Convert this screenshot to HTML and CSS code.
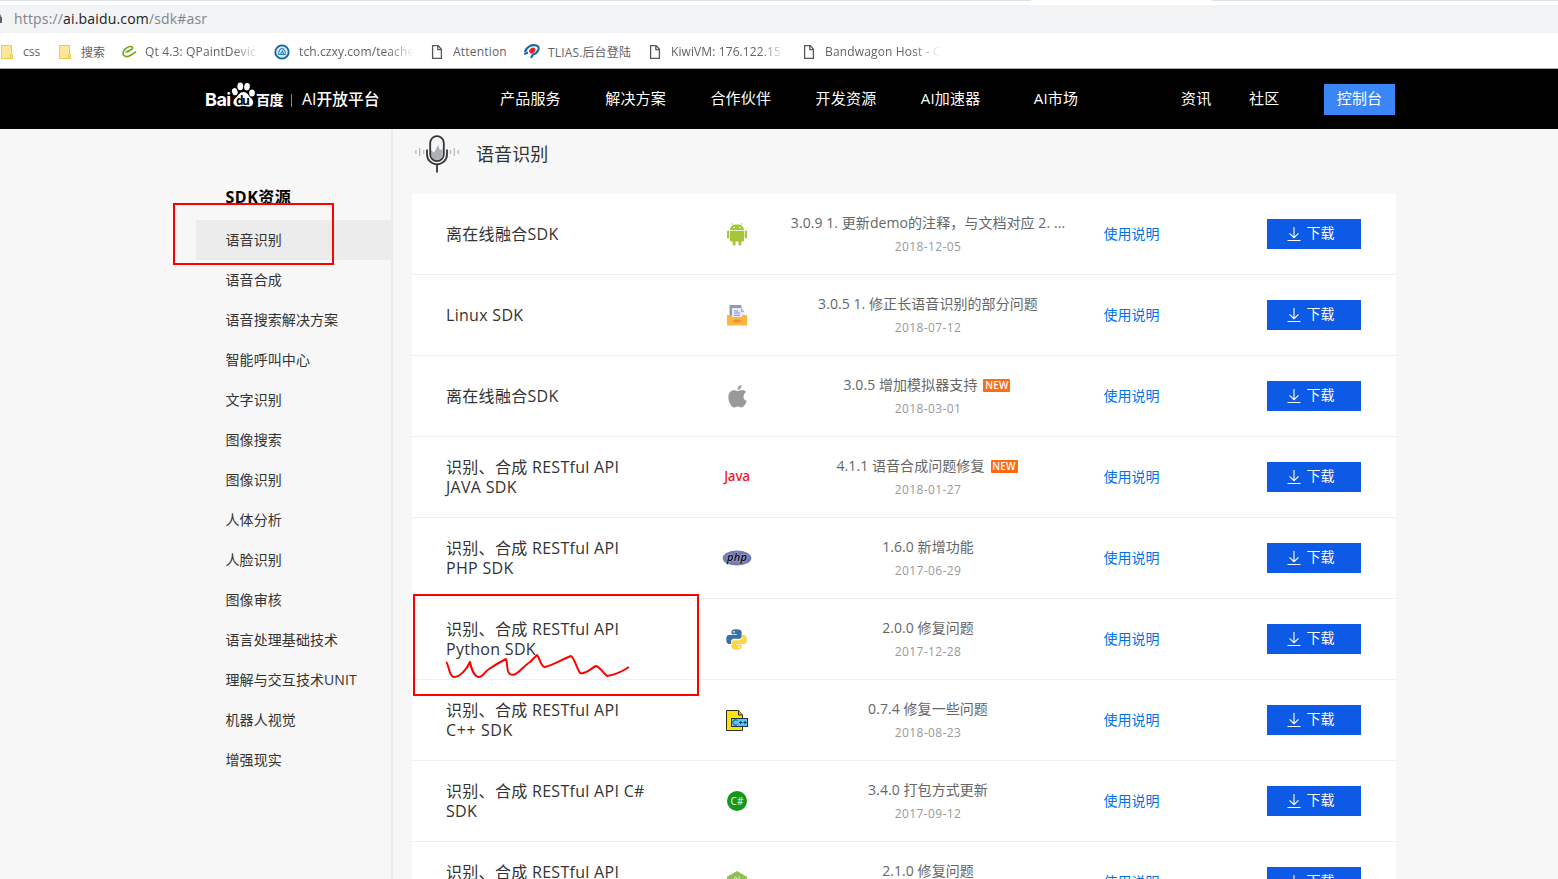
FILE: index.html
```html
<!DOCTYPE html>
<html lang="zh-CN">
<head>
<meta charset="utf-8">
<title>SDK资源</title>
<link rel="stylesheet" href="styles.css">
</head>
<body>
<svg class="defs" width="0" height="0">
  <symbol id="down" viewBox="0 0 14 16"><path d="M7 1v10.500M2.500 7.300L7 11.700l4.500-4.400M.5 14.500h13" fill="none" stroke="#fff" stroke-width="1.100"/></symbol>
  <symbol id="page" viewBox="0 0 12 16"><path d="M1.600 1.600h5.600l3.200 3.600v9.200H1.600zM6.800 1.600v4h3.600" fill="none" stroke="#55585c" stroke-width="1.300"/></symbol>
  <symbol id="folder" viewBox="0 0 14 16"><path d="M1.500 1.500h10v9h1v4h-11z" fill="#ffe69a" stroke="#eccb55"/><path d="M10.500 14v-3.500h2V14z" fill="#ffe69a" stroke="#eccb55"/></symbol>
</svg>
<div class="browser">
  <div class="tabs"></div>
  <div class="address">
    <svg class="lock" width="4" height="12" viewBox="0 0 4 12"><path d="M0 1q1 1 1 3h1v6H0z" fill="#5f6368"/></svg>
    <span class="url">https://<b>ai.baidu.com</b>/sdk#asr</span>
  </div>
  <div class="bookmarks">
    <span class="bm css"><svg width="14" height="16"><use href="#folder"/></svg><em>css</em></span>
    <span class="bm search"><svg width="14" height="16"><use href="#folder"/></svg><em>搜索</em></span>
    <span class="bm qt"><svg width="16" height="14" viewBox="0 0 16 14"><path d="M9 5c3-.5 3.500-3.500.5-3.500C5.500 1.500 1.500 6 2 9s4.500 3.200 7 1.500 3.500-1.500 6-4M4.500 7C6 7 8 6.300 9.500 5" fill="none" stroke="#74a81b" stroke-width="1.700"/></svg><em class="fade">Qt 4.3: QPaintDevic</em></span>
    <span class="bm tch"><svg width="16" height="16" viewBox="0 0 16 16"><circle cx="8" cy="8" r="6.700" fill="#d9edf8" stroke="#11659f" stroke-width="1.800"/><path d="M4.800 10.500C4 8 6 4.500 8 4.500s4 3.500 3.200 6zM6.500 10L8.500 7l1 3" fill="none" stroke="#267db5" stroke-width="1.100"/></svg><em class="fade">tch.czxy.com/teache</em></span>
    <span class="bm att"><svg width="12" height="16"><use href="#page"/></svg><em>Attention</em></span>
    <span class="bm tlias"><svg width="16" height="15" viewBox="0 0 16 15"><path d="M1 8C2 3 8 0 12.500 1.500S14 9 9 10.500l-2 3.500" fill="none" stroke="#1769a5" stroke-width="2.100"/><path d="M0 10l4-1.500" stroke="#1769a5" stroke-width="2"/><ellipse cx="8.300" cy="6.500" rx="3.300" ry="2.500" transform="rotate(-35 8.300 6.500)" fill="#ec1c24"/></svg><em>TLIAS.后台登陆</em></span>
    <span class="bm kiwi"><svg width="12" height="16"><use href="#page"/></svg><em class="fade">KiwiVM: 176.122.15</em></span>
    <span class="bm bwg"><svg width="12" height="16"><use href="#page"/></svg><em class="fade">Bandwagon Host - C</em></span>
  </div>
</div>
<header class="header">
  <div class="logo">
    <span class="bai">Bai</span>
    <svg class="paw" width="25" height="27" viewBox="0 0 25 27"><g fill="#fff"><ellipse cx="3.800" cy="10.700" rx="2.800" ry="3.600" transform="rotate(-15 3.800 10.700)"/><ellipse cx="9.300" cy="5.300" rx="2.900" ry="3.900"/><ellipse cx="16" cy="5.700" rx="2.800" ry="3.700" transform="rotate(10 16 5.700)"/><ellipse cx="21" cy="12" rx="2.900" ry="3.500"/><path d="M12.500 11c4 0 4.500 3.500 7.500 6 3.500 3 3 8.500-2 8.500-3 0-3-.5-5.500-.5s-3.500.5-5.500.5c-5 0-6-5.500-2.500-8.500s4-6 8-6z"/></g><text x="5" y="23.500" font-size="12" font-weight="700" textLength="14">du</text></svg>
    <span class="du">百度</span>
    <i class="divider"></i>
    <span class="platform">AI开放平台</span>
  </div>
  <nav class="nav"><a>产品服务</a><a>解决方案</a><a>合作伙伴</a><a>开发资源</a><a>AI加速器</a><a>AI市场</a></nav>
  <div class="tools"><a>资讯</a><a>社区</a><a class="console">控制台</a></div>
</header>
<div class="body">
  <aside class="side">
    <h2>SDK资源</h2>
    <ul>
      <li class="on">语音识别</li><li>语音合成</li><li>语音搜索解决方案</li><li>智能呼叫中心</li><li>文字识别</li><li>图像搜索</li><li>图像识别</li><li>人体分析</li><li>人脸识别</li><li>图像审核</li><li>语言处理基础技术</li><li>理解与交互技术UNIT</li><li>机器人视觉</li><li>增强现实</li>
    </ul>
  </aside>
  <main class="main">
    <div class="title">
      <svg width="46" height="40" viewBox="0 0 46 40"><g fill="none" stroke="#bcbcbc" stroke-width="1.400"><path d="M.9 15v4M4.700 13v8M8.700 15v4M35.500 15v4M39.300 13v8M43.300 15v4"/></g><path d="M16 15l2.500 2.500L20 16l3-6 2 5 2.500-1v6a5.800 5.800 0 0 1-11.500 0z" fill="#adb1b5"/><rect x="15.200" y="1.200" width="13.600" height="25" rx="6.800" fill="none" stroke="#353535" stroke-width="1.800"/><path d="M12 14.500v5a10 9.800 0 0 0 20 0v-5M22 29.500v8" fill="none" stroke="#353535" stroke-width="1.800"/></svg>
      <h1>语音识别</h1>
    </div>
    <div class="list">
      <div class="row"><div class="name">离在线融合SDK</div><div class="icon"><svg width="20" height="24" viewBox="0 0 20 24"><g fill="#a4c639"><path d="M3 8.200C3 4.500 6 2.500 10 2.500s7 2 7 5.700zM3 9h14v9.500q0 1-1 1H4q-1 0-1-1z"/><rect y="8.500" width="2.300" height="8" rx="1.100"/><rect x="17.700" y="8.500" width="2.300" height="8" rx="1.100"/><rect x="5.700" y="18" width="2.800" height="5.500" rx="1.200"/><rect x="11.500" y="18" width="2.800" height="5.500" rx="1.200"/></g><path d="M6.500 3.500L5 1M13.500 3.500L15 1" stroke="#a4c639" stroke-width=".8"/><circle cx="7" cy="5.500" r=".7" fill="#fff"/><circle cx="13" cy="5.500" r=".7" fill="#fff"/></svg></div><div class="desc"><p>3.0.9 1. 更新demo的注释，与文档对应 2. ...</p><time>2018-12-05</time></div><a class="doc">使用说明</a><a class="btn"><svg width="14" height="16"><use href="#down"/></svg><span>下载</span></a></div>
      <div class="row"><div class="name">Linux SDK</div><div class="icon"><svg width="20" height="21" viewBox="0 0 20 21"><path d="M2.500 0h12v12h-12z" fill="#929bb5"/><path d="M5 3h9l3.500 4v6H5z" fill="#e4eaf8"/><path d="M14 3v4h3.500z" fill="#aab4cf"/><path d="M7 6h4M7 8h6M7 10.300h6" stroke="#8290b5"/><path d="M0 10h4l1.500 2h9l1.500-2h4v10.500H0z" fill="#f9b83c"/><rect x="6" y="14.500" width="8" height="3" rx="1.500" fill="#ec8f38"/></svg></div><div class="desc"><p>3.0.5 1. 修正长语音识别的部分问题</p><time>2018-07-12</time></div><a class="doc">使用说明</a><a class="btn"><svg width="14" height="16"><use href="#down"/></svg><span>下载</span></a></div>
      <div class="row"><div class="name">离在线融合SDK</div><div class="icon"><svg width="19" height="23" viewBox="0 0 19 23"><path d="M15.500 12c0-2.500 1.200-4 2.600-5C15.500 4 12.500 5 9.800 6.200 7 5 4 4.500 1.700 7.500-1.500 12 1.500 20 5 22.300c2 .7 3-.7 4.800-.7s2.700 1.300 4.700.7c2-1.300 3.600-4 4.200-6.300-1.900-.8-3.200-2-3.200-4zM9.500 5C9.300 2.500 11 .5 13.500 0c.2 2.500-1.500 4.700-4 5z" fill="#999"/></svg></div><div class="desc"><p>3.0.5 增加模拟器支持<b class="new">NEW</b></p><time>2018-03-01</time></div><a class="doc">使用说明</a><a class="btn"><svg width="14" height="16"><use href="#down"/></svg><span>下载</span></a></div>
      <div class="row"><div class="name">识别、合成 RESTful API<br>JAVA SDK</div><div class="icon java">Java</div><div class="desc"><p>4.1.1 语音合成问题修复<b class="new">NEW</b></p><time>2018-01-27</time></div><a class="doc">使用说明</a><a class="btn"><svg width="14" height="16"><use href="#down"/></svg><span>下载</span></a></div>
      <div class="row"><div class="name">识别、合成 RESTful API<br>PHP SDK</div><div class="icon"><svg width="30" height="16" viewBox="0 0 30 16"><ellipse cx="15" cy="8" rx="14.400" ry="7.600" fill="#777bb3"/><text x="5" y="10.500" font-size="11" font-weight="600" font-style="italic" textLength="20" stroke="#aeb2d5" stroke-width="1" paint-order="stroke">php</text></svg></div><div class="desc"><p>1.6.0 新增功能</p><time>2017-06-29</time></div><a class="doc">使用说明</a><a class="btn"><svg width="14" height="16"><use href="#down"/></svg><span>下载</span></a></div>
      <div class="row"><div class="name">识别、合成 RESTful API<br>Python SDK</div><div class="icon python"><svg width="21" height="21" viewBox="0 0 21 21"><path d="M10.500.3C6.500.3 5.500 1.500 5.500 3v2.300h5.300V6H3C1 6 .2 8 .2 10.500S1.200 15 3 15h2v-2.500C5 10.800 6.500 9.800 8 9.800h5c1.600 0 2.600-1.200 2.600-2.600V3c0-1.600-1.600-2.700-5.100-2.700z" fill="#3772a4"/><path d="M10.500 20.700c4 0 5-1.200 5-2.700v-2.300h-5.300V15H18c2 0 2.800-2 2.800-4.500S19.800 6 18 6h-2v2.500c0 1.700-1.500 2.700-3 2.700H8c-1.600 0-2.600 1.200-2.600 2.600V18c0 1.600 1.600 2.700 5.100 2.700z" fill="#fdd545"/><circle cx="8" cy="2.800" r=".9" fill="#fff"/><circle cx="13" cy="18.200" r=".9" fill="#fff"/></svg></div><div class="desc"><p>2.0.0 修复问题</p><time>2017-12-28</time></div><a class="doc">使用说明</a><a class="btn"><svg width="14" height="16"><use href="#down"/></svg><span>下载</span></a></div>
      <div class="row"><div class="name">识别、合成 RESTful API<br><span class="cpp">C++ SDK</span></div><div class="icon"><svg width="22" height="21" viewBox="0 0 22 21"><path d="M.5.500h12l4 4.500v15.500H.5z" fill="#ffe20a" stroke="#332f20"/><path d="M12.500.500V5h4" fill="#e9b900" stroke="#332f20"/><rect x="5.500" y="8.500" width="16" height="8" fill="#5ac8fa" stroke="#1c3440"/><path d="M11.500 10.700q-1-1-2.500-.8c-3 .5-2.500 5 0 5.200q1.500.2 2.500-.8M13 12.500h3.500M14.700 10.800v3.500M17.300 12.500h3.500M19 10.800v3.500" fill="none" stroke="#17425a"/></svg></div><div class="desc"><p>0.7.4 修复一些问题</p><time>2018-08-23</time></div><a class="doc">使用说明</a><a class="btn"><svg width="14" height="16"><use href="#down"/></svg><span>下载</span></a></div>
      <div class="row"><div class="name">识别、合成 RESTful API C#<br>SDK</div><div class="icon"><svg width="20" height="20" viewBox="0 0 20 20"><circle cx="10" cy="10" r="10" fill="#129a17"/><text x="3.500" y="13.500" font-size="10" textLength="13" fill="#fff">C#</text></svg></div><div class="desc"><p>3.4.0 打包方式更新</p><time>2017-09-12</time></div><a class="doc">使用说明</a><a class="btn"><svg width="14" height="16"><use href="#down"/></svg><span>下载</span></a></div>
      <div class="row"><div class="name">识别、合成 RESTful API<br>&nbsp;</div><div class="icon"><svg width="20" height="23" viewBox="0 0 20 23"><path d="M10 0l10 5.700v11.500L10 23 0 17.200V5.700z" fill="#8cc152"/><path d="M7.500 8.500V6.500q2-1.500 2 .5t-1 1M11 6q2-.5 1.500 1.500T11 7.500" fill="none" stroke="#dcedc8" stroke-width=".9"/></svg></div><div class="desc"><p>2.1.0 修复问题</p><time>&nbsp;</time></div><a class="doc">使用说明</a><a class="btn"><svg width="14" height="16"><use href="#down"/></svg><span>下载</span></a></div>
    </div>
  </main>
</div>
<svg class="marks" width="1558" height="879" viewBox="0 0 1558 879"><g fill="none" stroke="#f00" stroke-width="2"><path d="M174 204h159v60H174zM414 595h284v100H414z"/><path d="M446 662c3 2 3 15 8 15 6 0 13-8 16-15 1 5 4 15 9 15 4 0 5-5 10-8 6-4 11-7 17-10 2 4 0 13 4 15 6 4 13-8 20-12l7-7c3 3 4 13 8 12 8-2 18-8 26-11 4 3 5 11 9 17 5 2 10-4 16-7 4 1 7 7 11 10 7-1 16-5 22-9" stroke-linejoin="round"/></g></svg>
</body>
</html>
```
FILE: styles.css
```css
* { box-sizing: border-box; }
body { margin: 0; height: 879px; overflow: hidden; background: #f7f7f7; color: #333; font-family: "Open Sans", "Noto Sans CJK SC", sans-serif; font-size: 14px; }
h1, h2, p, ul { margin: 0; padding: 0; font-weight: 400; }
ul { list-style: none; }
svg { flex: none; display: block; }
.defs { position: absolute; }
.browser { height: 69px; background: #fff; border-bottom: 1px solid #aaa; }
.tabs { height: 5px; }
.tabs::before { content: ""; display: block; height: 1px; background: linear-gradient(90deg, #dee1e6 1031px, #fff 1031px 1212px, #dee1e6 1212px); }
.address { height: 28px; background: #f1f3f4; display: flex; align-items: center; color: #80868b; padding-bottom: 1px; }
.url { margin-left: 10px; font-size: 14px; letter-spacing: .17px; }
.url b { font-weight: 400; color: #202124; }
.bookmarks { display: flex; height: 35px; align-items: center; color: #5f6368; font-size: 12px; padding-top: 2px; }
.bm { display: flex; align-items: center; flex: none; white-space: nowrap; }
.bm em { font-style: normal; }
.fade { -webkit-mask-image: linear-gradient(90deg, #000 88px, transparent 115px); mask-image: linear-gradient(90deg, #000 88px, transparent 115px); }
.css { width: 58px; } .css em { margin-left: 9px; }
.search { width: 63px; } .search em { margin-left: 9px; }
.qt { width: 153px; } .qt em { margin-left: 8px; width: 115px; letter-spacing: .15px; }
.tch { width: 157px; } .tch em { margin-left: 9px; width: 118px; letter-spacing: .1px; }
.att { width: 93px; } .att em { margin-left: 10px; letter-spacing: .2px; }
.tlias { width: 125px; } .tlias em { margin-left: 8px; letter-spacing: .15px; }
.kiwi { width: 154px; } .kiwi em { margin-left: 10px; width: 115px; letter-spacing: .1px; }
.bwg { width: 140px; } .bwg em { margin-left: 10px; width: 118px; letter-spacing: .15px; }
.header { height: 60px; background: #000; color: #fff; display: flex; align-items: center; font-size: 15px; padding-left: 205px; }
.logo { width: 295px; display: flex; align-items: center; height: 60px; }
.bai { font: 700 18px/20px Inter, sans-serif; width: 26px; letter-spacing: -.5px; margin-top: 2px; }
.paw { margin-top: -9px; }
.du { font-weight: 700; font-size: 14px; line-height: 20px; width: 28px; letter-spacing: -.5px; margin-top: 1px; }
.divider { width: 1px; height: 13px; background: #888; margin: 2px 10px 0 7px; }
.platform { font-size: 15.800px; font-weight: 500; line-height: 20px; white-space: nowrap; }
.nav { display: flex; width: 681px; padding-bottom: 4px; }
.nav a { width: 105.200px; white-space: nowrap; letter-spacing: .2px; }
.nav a:nth-child(5) { width: 113px; }
.tools { display: flex; align-items: center; }
.tools a { width: 68px; padding-bottom: 4px; letter-spacing: .2px; }
.tools .console { width: 71px; height: 31px; line-height: 28px; padding: 0; background: #3b86f7; text-align: center; margin-left: 7px; }
.body { display: flex; height: 750px; padding-left: 196px; }
.side { width: 197px; border-right: 2px solid #ebebeb; padding-top: 57px; flex: none; }
.side h2 { font-weight: 700; font-size: 16px; line-height: 22px; color: #000; padding-left: 29.500px; height: 34px; letter-spacing: .5px; }
.side li { height: 40px; line-height: 39px; padding-left: 29.500px; white-space: nowrap; letter-spacing: .08px; }
.side .on { background: #ececec; }
.main { margin-left: 19px; width: 984px; flex: none; overflow: hidden; }
.title { height: 65px; display: flex; align-items: flex-start; padding: 6px 0 0 3px; }
.title h1 { font-size: 18px; line-height: 26px; margin: 6px 0 0 15px; letter-spacing: .1px; }
.row { display: grid; grid-template-columns: 238px 106px 276px 201px 94px; align-items: center; height: 81px; padding-left: 34px; background: #fff; border-bottom: 1px solid #f0f0f0; }
.name { font-size: 16px; line-height: 20px; white-space: nowrap; letter-spacing: .3px; }
.cpp { letter-spacing: .6px; }
.icon { display: flex; justify-content: center; }
.python { padding-right: 1px; }
.java { color: #f3131b; font-size: 13.500px; letter-spacing: -.2px; font-weight: 500; padding-bottom: 3px; font-family: "Noto Sans", sans-serif; }
.desc { text-align: center; color: #666; white-space: nowrap; }
.desc p { line-height: 24px; display: flex; align-items: center; justify-content: center; white-space: pre; letter-spacing: .07px; }
.desc time { display: block; font-size: 12px; line-height: 22px; color: #999; letter-spacing: .4px; padding-top: 1px; margin-bottom: -1px; }
.new { background: #ff6a13; color: #fff; font-size: 10px; line-height: 13px; width: 27px; height: 13px; border-radius: 1px; margin: 0 2px 0 6px; font-weight: 600; text-align: center; letter-spacing: .2px; }
.doc { color: #0073eb; padding-left: 37.500px; padding-bottom: 2px; }
.btn { height: 30px; background: #0c5ae6; color: #fff; display: flex; align-items: center; padding-left: 20px; gap: 5.500px; }
.btn span { line-height: 20px; padding-bottom: 2px; }
.marks { position: absolute; left: 0; top: 0; pointer-events: none; }
```
